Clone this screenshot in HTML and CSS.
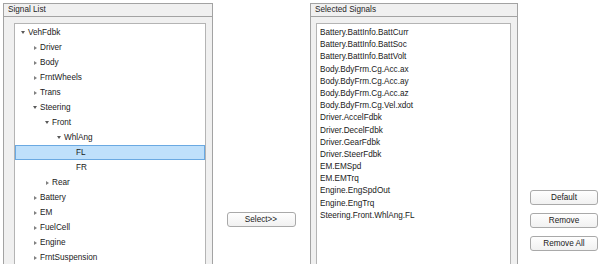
FILE: index.html
```html
<!DOCTYPE html>
<html lang="en">
<head>
    <meta charset="UTF-8">
    <meta name="viewport" content="width=device-width, initial-scale=1.0">
    <title>Signal Selector</title>
    <link rel="stylesheet" href="styles.css">
</head>
<body>
    <div class="app">
        <div class="panel left-panel">
            <div class="panel-title">Signal List</div>
            <div class="panel-body">
                <div class="tree">
                    <div class="node lv0"><span class="tw open"></span>VehFdbk</div>
                    <div class="node lv1"><span class="tw"></span>Driver</div>
                    <div class="node lv1"><span class="tw"></span>Body</div>
                    <div class="node lv1"><span class="tw"></span>FrntWheels</div>
                    <div class="node lv1"><span class="tw"></span>Trans</div>
                    <div class="node lv1"><span class="tw open"></span>Steering</div>
                    <div class="node lv2"><span class="tw open"></span>Front</div>
                    <div class="node lv3"><span class="tw open"></span>WhlAng</div>
                    <div class="node lv4 selected"><span class="tw leaf"></span>FL</div>
                    <div class="node lv4"><span class="tw leaf"></span>FR</div>
                    <div class="node lv2"><span class="tw"></span>Rear</div>
                    <div class="node lv1"><span class="tw"></span>Battery</div>
                    <div class="node lv1"><span class="tw"></span>EM</div>
                    <div class="node lv1"><span class="tw"></span>FuelCell</div>
                    <div class="node lv1"><span class="tw"></span>Engine</div>
                    <div class="node lv1"><span class="tw"></span>FrntSuspension</div>
                </div>
            </div>
        </div>
        <div class="middle">
            <button class="btn">Select&gt;&gt;</button>
        </div>
        <div class="panel right-panel">
            <div class="panel-title">Selected Signals</div>
            <div class="panel-body">
                <div class="list">
                    <div class="item">Battery.BattInfo.BattCurr</div>
                    <div class="item">Battery.BattInfo.BattSoc</div>
                    <div class="item">Battery.BattInfo.BattVolt</div>
                    <div class="item">Body.BdyFrm.Cg.Acc.ax</div>
                    <div class="item">Body.BdyFrm.Cg.Acc.ay</div>
                    <div class="item">Body.BdyFrm.Cg.Acc.az</div>
                    <div class="item">Body.BdyFrm.Cg.Vel.xdot</div>
                    <div class="item">Driver.AccelFdbk</div>
                    <div class="item">Driver.DecelFdbk</div>
                    <div class="item">Driver.GearFdbk</div>
                    <div class="item">Driver.SteerFdbk</div>
                    <div class="item">EM.EMSpd</div>
                    <div class="item">EM.EMTrq</div>
                    <div class="item">Engine.EngSpdOut</div>
                    <div class="item">Engine.EngTrq</div>
                    <div class="item">Steering.Front.WhlAng.FL</div>
                </div>
            </div>
        </div>
        <div class="actions">
            <button class="btn">Default</button>
            <button class="btn">Remove</button>
            <button class="btn">Remove All</button>
        </div>
    </div>
</body>
</html>
```

FILE: styles.css
```css
html, body { margin: 0; background: #fff; }
body { font-family: Arial, "Liberation Sans", sans-serif; font-size: 8.2px; color: #1a1a1a; overflow: hidden; height: 264px; }
.app { display: flex; align-items: flex-start; padding: 3px 0 0 3px; }

.panel { box-sizing: border-box; height: 261px; border: 1px solid #a3a3a3; border-bottom: 0; background: #f0f0f0; display: flex; flex-direction: column; overflow: hidden; }
.left-panel { width: 210px; }
.right-panel { width: 208px; }
.panel-title { height: 12px; line-height: 12px; padding-left: 4px; border-bottom: 1px solid #a3a3a3; color: #262626; }
.panel-body { flex: 1; display: flex; padding: 6px 6px 0 10px; min-height: 0; }
.right-panel .panel-body { padding: 6px 6px 0 5px; }

.tree, .list { flex: 1; background: #fff; border: 1px solid #b4b4b4; border-bottom: 0; overflow: hidden; }
.tree { padding-top: 1px; }
.node { box-sizing: border-box; height: 15px; line-height: 15px; display: flex; align-items: center; border: 1px solid transparent; white-space: nowrap; }
.node.selected { background: #bfe0fb; border-color: #6aa9e2; }
.lv0 { padding-left: 5px; }
.lv1 { padding-left: 17px; }
.lv2 { padding-left: 29px; }
.lv3 { padding-left: 41px; }
.lv4 { padding-left: 53px; }

.tw { width: 7px; height: 15px; display: flex; align-items: center; flex: none; }
.tw::before { content: ""; display: block; width: 0; height: 0; border-top: 2.5px solid transparent; border-bottom: 2.5px solid transparent; border-left: 3px solid #808080; margin-left: 1px; }
.tw.open::before { border-left: 2.5px solid transparent; border-right: 2.5px solid transparent; border-top: 3px solid #595959; border-bottom: 0; margin-left: 0; }
.tw.leaf::before { display: none; }

.list { padding: 3px 0 0 3px; }
.item { height: 12.2px; line-height: 12.2px; white-space: nowrap; }

.btn { box-sizing: border-box; width: 69px; height: 15px; padding: 0; font-family: Arial, "Liberation Sans", sans-serif; font-size: 8.2px; color: #1a1a1a; border: 1px solid #a9a9a9; border-radius: 3px; background: linear-gradient(#fefefe, #f1f1f1); }
.middle { width: 97px; display: flex; justify-content: center; padding-top: 209px; }
.middle .btn { margin-left: -1px; }
.actions { display: flex; flex-direction: column; gap: 7px; padding: 187px 0 0 12px; }
.actions .btn { width: 68px; margin-bottom: 1px; }
```
